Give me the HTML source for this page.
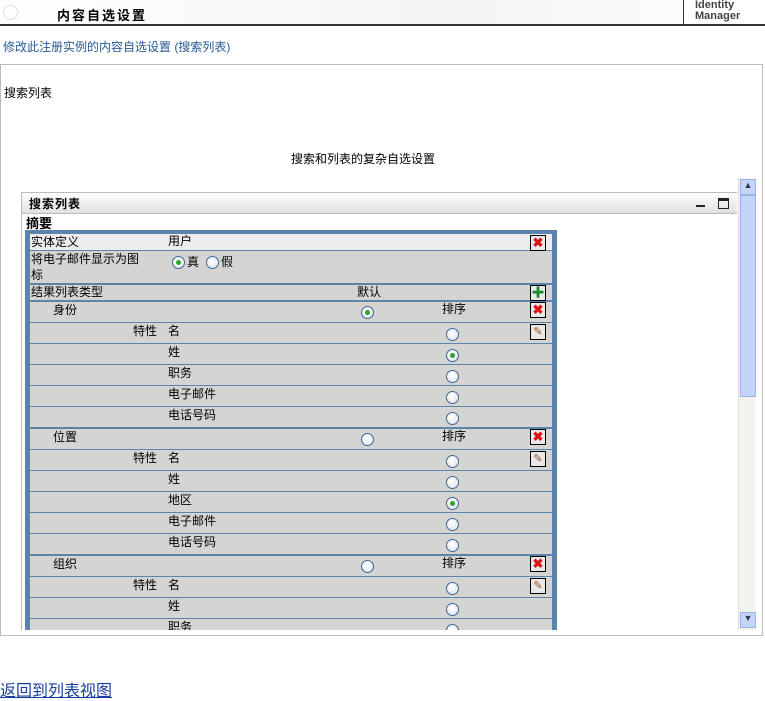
<!DOCTYPE html>
<html><head><meta charset="utf-8"><style>
body{margin:0;width:765px;height:698px;position:relative;background:#fff;font-family:"Liberation Sans","Noto Sans CJK SC","WenQuanYi Zen Hei",sans-serif;font-size:12px;color:#000;overflow:hidden}
.a{position:absolute}
.hdr{left:0;top:0;width:765px;height:24px;background:linear-gradient(90deg,#fff,#f4f4f4 60%,#fff);border-bottom:2px solid #333}
.tbl{left:25px;top:230px;width:522px;padding:4px 5px;background:#5b84ac}
.r{position:relative;height:20px;background:#d4d5d2;margin-bottom:1px;line-height:14px}
.r.g{margin-bottom:2px}
.r span{position:absolute;top:1px;white-space:nowrap}
.rad{position:absolute;width:11px;height:11px;border:1px solid #3d6796;border-radius:50%;background:radial-gradient(circle at 40% 35%,#fff,#dde3ea)}
.rad.on::after{content:"";position:absolute;left:3px;top:3px;width:5px;height:5px;border-radius:50%;background:#2aa52a}
.btn{position:absolute;left:500px;top:1px;width:14px;height:14px;border:1px solid #000;background:#e8e8e8;font-size:13px;line-height:14px;text-align:center;font-weight:bold}
.x{color:#e0101a}.p{color:#1a8a2a}.e{color:#a05020;font-size:11px;font-weight:normal}
</style></head><body>
<div class="a hdr"></div>
<div class="a" style="left:3px;top:5px;width:13px;height:13px;border:1px solid #ddd;border-radius:50%"></div>
<div class="a" style="left:57px;top:5px;font-size:13px;font-weight:bold;letter-spacing:2px">内容自选设置</div>
<div class="a" style="left:683px;top:0;width:80px;height:24px;border-left:1px solid #333;background:#fff"></div>
<div class="a" style="left:695px;top:0px;font-size:11px;line-height:11px;color:#444;font-weight:bold">Identity<br>Manager</div>
<div class="a" style="left:3px;top:38px;color:#2a5a94">修改此注册实例的内容自选设置 (搜索列表)</div>
<div class="a" style="left:0;top:64px;width:761px;height:570px;border:1px solid #bbb"></div>
<div class="a" style="left:4px;top:84px">搜索列表</div>
<div class="a" style="left:291px;top:150px">搜索和列表的复杂自选设置</div>
<div class="a" style="left:738px;top:178px;width:16px;height:452px;background:#f3f3ee;border-left:1px solid #ddd">
 <div class="a" style="left:1px;top:1px;width:14px;height:14px;background:#c4d4f6;border:1px solid #9cb4e4;font-size:9px;text-align:center;color:#335">▲</div>
 <div class="a" style="left:1px;top:17px;width:14px;height:200px;background:#c4d4f6;border:1px solid #9cb4e4"></div>
 <div class="a" style="left:1px;top:434px;width:14px;height:14px;background:#c4d4f6;border:1px solid #9cb4e4;font-size:9px;text-align:center;color:#335">▼</div>
</div>
<div class="a" style="left:0;top:178px;width:737px;height:452px;overflow:hidden">
 <div class="a" style="left:21px;top:14px;width:716px;height:500px;border-left:1px solid #bbb;border-top:1px solid #bbb"></div>
 <div class="a" style="left:22px;top:15px;width:715px;height:20px;background:linear-gradient(#fff,#e0e0dc);border-bottom:1px solid #bbb"></div>
 <div class="a" style="left:29px;top:17px;font-weight:bold;font-size:12px;letter-spacing:1px">搜索列表</div>
 <div class="a" style="left:696px;top:27px;width:9px;height:2px;background:#222"></div>
 <div class="a" style="left:718px;top:20px;width:9px;height:7px;border:1px solid #222;border-top-width:3px"></div>
 <div class="a" style="left:26px;top:35px;font-weight:bold;font-size:13px">摘要</div>
</div>
<div class="a" style="left:0;top:178px;width:737px;height:452px;overflow:hidden">
<div class="a tbl" style="top:52px">
 <div class="r" style="height:16px;background:#ececec"><span style="left:1px">实体定义</span><span style="left:138px;top:0">用户</span><div class="btn x">✖</div></div>
 <div class="r g" style="height:32px"><span style="left:1px;top:0;line-height:16px">将电子邮件显示为图<br>标</span><div class="rad on" style="left:142px;top:5px"></div><span style="left:157px;top:4px">真</span><div class="rad" style="left:176px;top:5px"></div><span style="left:191px;top:4px">假</span></div>
 <div class="r g" style="height:15px"><span style="left:1px;top:0">结果列表类型</span><span style="left:327px;top:0">默认</span><div class="btn p" style="top:0">✚</div></div>
 <div class="r"><span style="left:23px">身份</span><div class="rad on" style="left:331px;top:4px"></div><span style="left:412px;top:0">排序</span><div class="btn x" style="top:0">✖</div></div>
 <div class="r"><span style="left:103px">特性</span><span style="left:138px">名</span><div class="rad" style="left:416px;top:5px"></div><div class="btn e">✎</div></div>
 <div class="r"><span style="left:138px">姓</span><div class="rad on" style="left:416px;top:5px"></div></div>
 <div class="r"><span style="left:138px">职务</span><div class="rad" style="left:416px;top:5px"></div></div>
 <div class="r"><span style="left:138px">电子邮件</span><div class="rad" style="left:416px;top:5px"></div></div>
 <div class="r g"><span style="left:138px">电话号码</span><div class="rad" style="left:416px;top:5px"></div></div>
 <div class="r"><span style="left:23px">位置</span><div class="rad" style="left:331px;top:4px"></div><span style="left:412px;top:0">排序</span><div class="btn x" style="top:0">✖</div></div>
 <div class="r"><span style="left:103px">特性</span><span style="left:138px">名</span><div class="rad" style="left:416px;top:5px"></div><div class="btn e">✎</div></div>
 <div class="r"><span style="left:138px">姓</span><div class="rad" style="left:416px;top:5px"></div></div>
 <div class="r"><span style="left:138px">地区</span><div class="rad on" style="left:416px;top:5px"></div></div>
 <div class="r"><span style="left:138px">电子邮件</span><div class="rad" style="left:416px;top:5px"></div></div>
 <div class="r g"><span style="left:138px">电话号码</span><div class="rad" style="left:416px;top:5px"></div></div>
 <div class="r"><span style="left:23px">组织</span><div class="rad" style="left:331px;top:4px"></div><span style="left:412px;top:0">排序</span><div class="btn x" style="top:0">✖</div></div>
 <div class="r"><span style="left:103px">特性</span><span style="left:138px">名</span><div class="rad" style="left:416px;top:5px"></div><div class="btn e">✎</div></div>
 <div class="r"><span style="left:138px">姓</span><div class="rad" style="left:416px;top:5px"></div></div>
 <div class="r"><span style="left:138px">职务</span><div class="rad" style="left:416px;top:5px"></div></div>
 <div class="r"><span style="left:138px">电子邮件</span><div class="rad" style="left:416px;top:5px"></div></div>
</div>
</div>
<div class="a" style="left:0;top:677px;font-size:16px;color:#1a3fa0;text-decoration:underline">返回到列表视图</div>
</body></html>
